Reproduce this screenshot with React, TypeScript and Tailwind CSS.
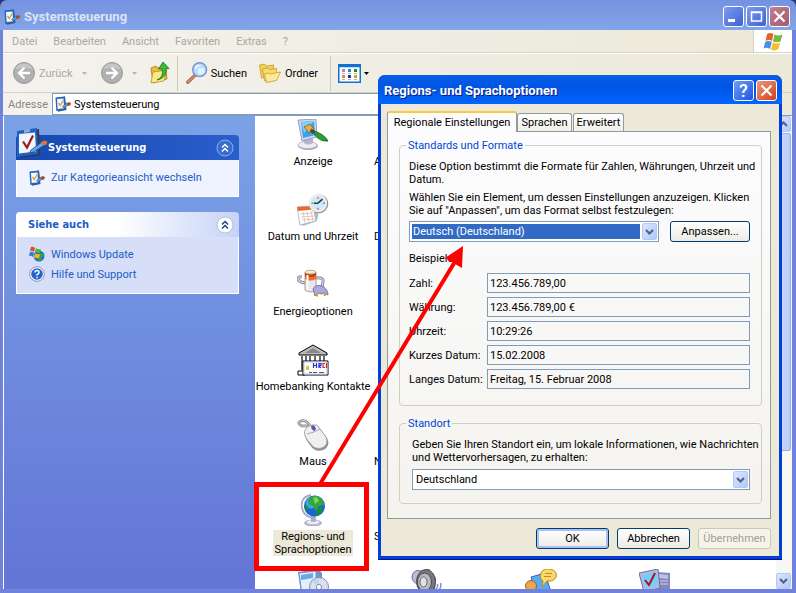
import React from 'react';

const PanelIcon: React.FC<{ className?: string }> = ({ className }) => (
  <svg viewBox="0 0 32 32" className={className}>
    <path d="M4 4l19-3 1 26-20 3z" fill="#333a50" />
    <path d="M1 3l20-3 1 26-21 3z" fill="#1d63c4" />
    <path d="M3 6l16-1.500 1 19L3 25.500z" fill="#eef6ff" />
    <path d="M8 1.500l6-1v3.500l-6 1z" fill="#8fa9cf" />
    <path d="M7 13.500l4 6 6-12" fill="none" stroke="#a01818" strokeWidth="2.200" />
    <path d="M15 22l11-8 2.500 3-11 7-4 1z" fill="#64a6ee" stroke="#24457c" strokeWidth=".8" />
    <path d="M25 14.500l3-2 3.500 1-1 3-3.500 1z" fill="#e8742c" />
  </svg>
);

const RunIcon: React.FC<{ className?: string }> = ({ className }) => (
  <svg viewBox="0 0 16 16" className={className}>
    <path d="M2 2l8-1.500 1.500 13.500-8.500 1.700z" fill="#4a5266" />
    <path d="M.5 1.500l9.500-1 .8 13-9.500 1.500z" fill="#2367bd" />
    <path d="M2 3l6.500-.6.6 9.800-6.500.8z" fill="#f4faff" />
    <path d="M3.500 7l1.800 2.500L8 4.500" fill="none" stroke="#d8a038" strokeWidth="1.300" />
    <path d="M7.500 10.500l4-3.500 1.500 2.200-4 3z" fill="#54a0f0" stroke="#24457c" strokeWidth=".5" />
    <path d="M11.500 7.500L13.500 6 16 7l-.5 2.300-2.700.7z" fill="#a4511d" />
  </svg>
);

const WindowsFlag: React.FC<{ className?: string }> = ({ className }) => (
  <svg viewBox="0 0 20 19" className={className}>
    <path d="M4 2Q7 0 10.500 2L9 9Q6 7 2.500 9z" fill="#e8632c" />
    <path d="M11.500 2.500Q15 4.500 19.500 2.500L17.500 9.500Q13.500 11 10 9.500z" fill="#79b93c" />
    <path d="M2.200 10Q5.500 8 8.800 10L7 17Q4 15 .5 16.500z" fill="#4b8de0" />
    <path d="M9.800 10.500Q13.500 12.500 17.200 10.500L15.500 17Q11.500 19.500 8 17.500z" fill="#f6bd30" />
  </svg>
);

const NavCircle: React.FC<{ forward?: boolean }> = ({ forward }) => (
  <svg viewBox="0 0 24 24" className="w-6 h-6">
    <circle cx="12" cy="12" r="10.500" fill="#b0b0b0" stroke="#9a9a9a" />
    <path d="M3 9a9.500 9.500 0 0 1 18 0Q12 4 3 9z" fill="#c6c6c6" />
    {forward ? (
      <path d="M6 12h10M11.500 6.500L17 12l-5.500 5.500" fill="none" stroke="#fff" strokeWidth="2.400" />
    ) : (
      <path d="M18 12H8M12.500 6.500L7 12l5.500 5.500" fill="none" stroke="#fff" strokeWidth="2.400" />
    )}
  </svg>
);

const UpFolderIcon = () => (
  <svg viewBox="0 0 20 24" className="w-5 h-6">
    <path d="M1 7l5-2 2 2 8-1 1 12-14 4z" fill="#e9bd3c" stroke="#a97d18" strokeWidth=".8" />
    <path d="M1 22l2-11 14-2-3 11z" fill="#fbe987" stroke="#bb9025" strokeWidth=".8" />
    <path d="M7 19q7-3 5-11H8.500L13 1l6 6.500h-3Q17 17 7 19z" fill="#3db83a" stroke="#1b781d" strokeWidth=".8" />
  </svg>
);

const SearchIcon = () => (
  <svg viewBox="0 0 24 24" className="w-6 h-6">
    <path d="M1.500 21L10 13l2 2-8 8q-3 1-2.500-2z" fill="#df8442" stroke="#7a55a0" strokeWidth=".8" />
    <circle cx="15.500" cy="8.500" r="7.300" fill="#b8e0fb" stroke="#7d8fd4" strokeWidth="1.500" />
    <path d="M10 8q1-5 7-4.500-3 1-7 4.500z" fill="#fff" />
    <circle cx="17" cy="10" r="3.500" fill="#dff4ff" />
  </svg>
);

const FoldersIcon = () => (
  <svg viewBox="0 0 23 20" className="w-6 h-5">
    <path d="M1 2l5-1 2 2 7-1v10L3 15z" fill="#f4cf55" stroke="#c79a2a" strokeWidth=".8" />
    <path d="M4 6l5-1 2 1.500 7-1v10L6 18z" fill="#f8dc70" stroke="#c79a2a" strokeWidth=".8" />
    <path d="M6 11l4-1 2 1 10-2-4 8.500L8 19.500z" fill="#fceb96" stroke="#c79a2a" strokeWidth=".8" />
  </svg>
);

const ViewsIcon = () => (
  <svg viewBox="0 0 23 19" className="w-[23px] h-[19px]">
    <rect x=".75" y=".75" width="21.500" height="17.500" fill="#fff" stroke="#1270cf" strokeWidth="1.500" />
    <path d="M1 2h21" stroke="#1270cf" strokeWidth="2.500" />
    <path d="M4 5h3v3H4z" fill="#9a93c8" />
    <path d="M10 5h3v3h-3z" fill="#2f7fe0" />
    <path d="M16 5h3v3h-3z" fill="#12941d" />
    <path d="M4 11h3v3H4z" fill="#f4814a" />
    <path d="M10 11h3v3h-3z" fill="#12409c" />
    <path d="M16 11h3v3h-3z" fill="#d2a411" />
    <path d="M4 9.500h3m3 0h3m3 0h3M4 15.500h3m3 0h3m3 0h3" stroke="#b4b4b4" />
  </svg>
);

const MonitorArt = () => (
  <>
    <ellipse cx="11" cy="27" rx="10" ry="4" fill="#a9a9c0" />
    <ellipse cx="10.500" cy="26" rx="9.500" ry="3.700" fill="#ececf6" stroke="#a3a3bd" strokeWidth=".7" />
    <path d="M7 19l9 1v4q-5 3-9 0z" fill="#b4b4cc" />
    <path d="M1 1l18-1 1 18-15 4z" fill="#d4d4e8" stroke="#8d8daa" strokeWidth=".8" />
    <path d="M4 3l13-1 1 14-12 3z" fill="#35a2f3" />
    <path d="M4 3l13-1-10 12z" fill="#7fd0ff" />
    <path d="M7 8l6-3 4 5-5 4z" fill="#e2ae46" stroke="#8a5b14" strokeWidth=".8" />
    <path d="M17 12q10 3 14 10-8 1-14-7z" fill="#29a033" stroke="#0e6417" strokeWidth=".9" />
    <path d="M14 9.500l4.500 2.500-2.500 3-3-2.500z" fill="#4a4a42" />
  </>
);

const ClockArt = () => (
  <>
    <path d="M1 14l21 3-2 10-14 5-3-3z" fill="#b3bbcc" />
    <path d="M0 13l16-1 3 15-16 4z" fill="#fff" stroke="#a4acbe" strokeWidth=".8" />
    <path d="M0 13l16-1 .6 3.500L1 17z" fill="#ea6a2c" />
    <path d="M3 20l13-1M4 23l13-1M5 26l13-1M6 18l2 11M10 18l2 10M14 17l2 10" stroke="#dfb9ac" strokeWidth=".8" />
    <circle cx="21.800" cy="9.800" r="9.500" fill="#909298" />
    <circle cx="21" cy="9.200" r="8.200" fill="#cdeafb" stroke="#eceef2" strokeWidth="1.800" />
    <path d="M21 9.200l4.500-4M21 9.200h-4" stroke="#273958" strokeWidth="1.600" />
    <path d="M21 2.700v2m0 9v2m-6.500-6.500h2m9.500 0h2" stroke="#e85c33" strokeWidth="1.300" />
  </>
);

const PowerArt = () => (
  <>
    <path d="M8 14q-6-1-7-4 0-3 4-2M19 9q8-1 7 4l-1 5" fill="none" stroke="#85869d" strokeWidth="3" />
    <path d="M8 14q-6-1-7-4 0-3 4-2M19 9q8-1 7 4l-1 5" fill="none" stroke="#d8d8e4" strokeWidth="1.200" />
    <path d="M8 3q5-3 11 0v18q-6 4-11 0z" fill="#e9e5ea" stroke="#9a8685" strokeWidth=".8" />
    <path d="M8 4q5 3 11 0v6q-6 3-11 0z" fill="#e8702c" />
    <path d="M8 4q5 3 11 0v2.500q-6 3-11 0z" fill="#b5401b" />
    <path d="M10.500 6v15" stroke="#fffaf0" strokeWidth="2" />
    <ellipse cx="13.500" cy="3" rx="5.500" ry="1.800" fill="#f6eac3" stroke="#a69178" strokeWidth=".6" />
    <path d="M16 20q3-5 9-3 6 3 6 9l-4-2-3 1-3-1-3 3z" fill="#a8aae0" stroke="#6062a0" strokeWidth=".8" />
    <path d="M20 23v4.500m7-4.500l1 4" stroke="#d2a52b" strokeWidth="2.200" />
  </>
);

const BankArt = () => (
  <>
    <path d="M2 9L16 1l14 8v2H2z" fill="#bbb" stroke="#000" />
    <path d="M8 9l8-5 8 5z" fill="#888" />
    <path d="M4 12h24v14H4z" fill="#fff" />
    <path d="M5 12v14m4-14v14m4-14v14m5-14v14m5-14v14m4-14v14" stroke="#444" strokeWidth="1.600" />
    <path d="M1 27h7v4H1z" fill="#fff" stroke="#000" />
    <path d="M6 17h25v14H6z" fill="#fff" stroke="#000" />
    <path d="M7 18h23v12H7z" fill="none" stroke="#b7ccf0" />
    <path d="M9 22h3v4H9z" fill="#e5c81c" />
    <path d="M16.500 19v5m3-5v5m-3-2.500h3M22 24v-4.500h2v2h-2l2 2.500" fill="none" stroke="#1830d8" strokeWidth="1.200" />
    <path d="M28 19.500h-2v4h2M29.500 19v5" fill="none" stroke="#e02525" strokeWidth="1.200" />
    <path d="M12 28.500h3m1 0h4m2 0h5" stroke="#555" strokeWidth="1.200" />
  </>
);

const MouseArt = () => (
  <>
    <path d="M13 7Q9 0 4 2T5 7q9-1 8 4" fill="none" stroke="#777" strokeWidth="2.600" />
    <path d="M13 7Q9 0 4 2T5 7q9-1 8 4" fill="none" stroke="#d5d5d5" strokeWidth="1.200" />
    <path d="M8 12q3-6 13-5l9 12q4 8-4 12-8 3-13-5Q6 17 8 12z" fill="#8f8f94" />
    <path d="M8 11q3-6 12-5l9 12q3 8-4 11-8 2-12-5Q6 17 8 11z" fill="#f0f0f1" stroke="#9a9aa0" strokeWidth=".8" />
    <path d="M10 15q6-1 13-5M14 6l4 6" fill="none" stroke="#a9a9b0" />
    <ellipse cx="16.500" cy="9" rx="2" ry="2.800" fill="#5658ab" transform="rotate(-30 16.500 9)" />
  </>
);

const GlobeArt = () => (
  <>
    <ellipse cx="16" cy="29" rx="8.500" ry="3" fill="#c0c0d4" stroke="#8b8ba6" strokeWidth=".6" />
    <ellipse cx="16" cy="28" rx="6" ry="1.800" fill="#f4f4fa" />
    <path d="M14 22h5v6h-5z" fill="#b0b0ca" />
    <path d="M14 1Q3 3 5 14q2 9 12 10" fill="none" stroke="#a7a7c6" strokeWidth="1.800" />
    <circle cx="17.500" cy="12" r="10.500" fill="#1768cf" />
    <circle cx="14" cy="9" r="5.500" fill="#3fa2f2" />
    <path d="M14 3q7-4 12 4l1 4-5 1-3 5-3-5-4-2-1-4z" fill="#31a83b" />
    <path d="M21 14l5-1-2 6-4 3q-2-3 1-8zM8 10l4 4-1 3-3-2z" fill="#1f8e33" />
    <path d="M16 4l4-1 2 4-4 3z" fill="#8bcd4e" />
  </>
);

const SoftwareArt = () => (
  <>
    <path d="M1 3l20-3 4 4v28H5z" fill="#6f94cc" />
    <path d="M2 4l17-2v30H6z" fill="#e3effb" stroke="#7397c8" />
    <path d="M4 6l12-2v5L4 11z" fill="#67a7ec" />
    <circle cx="22" cy="18" r="9.500" fill="#dbdfee" stroke="#8490b3" />
    <path d="M22 18l-7-6q3-3 7-3z" fill="#b6d9f4" />
    <path d="M22 18l8 1q0 4-4 7z" fill="#f1d3e1" />
    <circle cx="22" cy="18" r="2.600" fill="#fff" stroke="#8490b3" />
  </>
);

const SpeakerArt = () => (
  <>
    <ellipse cx="7" cy="8" rx="6" ry="6.500" fill="#bdbdd6" stroke="#6c6c92" />
    <path d="M9 2l9-2 7 10-2 20-10-5z" fill="#66666b" />
    <ellipse cx="15" cy="12.500" rx="9.500" ry="12" fill="#77777c" stroke="#4b4b50" />
    <ellipse cx="13.500" cy="13" rx="7" ry="9" fill="#b9b9be" stroke="#4d4d54" />
    <ellipse cx="12.500" cy="13" rx="3.500" ry="5" fill="#e2e2e6" stroke="#6b6b72" />
    <path d="M25 20q2-2 1.500-5m2 5q2-2 1-6" fill="none" stroke="#8b8ad0" strokeWidth="1.500" />
  </>
);

const SpeechArt = () => (
  <>
    <path d="M6 8l14-4 5 16-14 5z" fill="#55aef3" stroke="#3a65a5" />
    <path d="M16 4q2-5 9-4 8 2 6 8-2 5-9 4l-5 6 1-6q-4-2-2-8z" fill="#fad76a" stroke="#bd8820" />
    <path d="M20 4.500h7m-8 3h7" stroke="#c68b22" />
    <circle cx="6" cy="17" r="5.500" fill="#efa44e" stroke="#a96222" />
    <path d="M0 30q1-8 7-8t7 10z" fill="#7889ce" />
  </>
);

const SystemArt = () => (
  <>
    <path d="M18 3l13 1v26l-12-3z" fill="#8587ba" />
    <path d="M20 5l9 1v4l-9-1z" fill="#c0c1e2" />
    <path d="M20 12h9m-9 3h9" stroke="#c9caec" />
    <path d="M0 4l19-4 2 19L5 23z" fill="#b6b9dc" stroke="#6b6ea5" />
    <path d="M3 6l14-3 2 13-13 3z" fill="#75cdfb" />
    <path d="M6 11l4 5L16 4" fill="none" stroke="#a51616" strokeWidth="2" />
  </>
);

type Entry = { label: string; art?: React.ReactNode; selected?: boolean } | null;

const entries: Entry[] = [
  { label: 'Anzeige', art: <MonitorArt /> },
  { label: 'A' },
  null,
  null,
  { label: 'Datum und Uhrzeit', art: <ClockArt /> },
  { label: 'D' },
  null,
  null,
  { label: 'Energieoptionen', art: <PowerArt /> },
  null,
  null,
  null,
  { label: 'Homebanking Kontakte', art: <BankArt /> },
  null,
  null,
  null,
  { label: 'Maus', art: <MouseArt /> },
  { label: 'N' },
  null,
  null,
  { label: 'Regions- und Sprachoptionen', art: <GlobeArt />, selected: true },
  { label: 'S' },
  null,
  null,
  { label: '', art: <SoftwareArt /> },
  { label: '', art: <SpeakerArt /> },
  { label: '', art: <SpeechArt /> },
  { label: '', art: <SystemArt /> },
];

const menus = ['Datei', 'Bearbeiten', 'Ansicht', 'Favoriten', 'Extras', '?'];

const samples = [
  { id: 'zahl', label: 'Zahl:', value: '123.456.789,00' },
  { id: 'waehrung', label: 'Währung:', value: '123.456.789,00 €' },
  { id: 'uhrzeit', label: 'Uhrzeit:', value: '10:29:26' },
  { id: 'kurz', label: 'Kurzes Datum:', value: '15.02.2008' },
  { id: 'lang', label: 'Langes Datum:', value: 'Freitag, 15. Februar 2008' },
];

const Caret: React.FC<{ className: string }> = ({ className }) => (
  <svg viewBox="0 0 5 3" fill="currentColor" className={className}>
    <path d="M0 0h5L2.500 3z" />
  </svg>
);

const Arrow: React.FC<{ up?: boolean }> = ({ up }) => (
  <span className="flex w-[15px] shrink-0 items-center justify-center rounded-[2px] border border-[#b5c8f5] bg-linear-to-br from-[#dbe6fe] to-[#b0c8f8] pointer-events-none">
    <svg viewBox="0 0 9 6" className="w-[9px] h-[6px]">
      <path d={up ? 'M1 5l3.500-3.500L8 5' : 'M1 1l3.500 3.500L8 1'} fill="none" stroke="#4d6185" strokeWidth="2" />
    </svg>
  </span>
);

const Chevrons: React.FC<{ dark?: boolean }> = ({ dark }) => (
  <svg viewBox="0 0 18 18" className="w-[18px] h-[18px]">
    <circle cx="9" cy="9" r="8" fill={dark ? '#3a6bd0' : '#fff'} stroke={dark ? '#8fb0ee' : '#b7bfdc'} />
    <path d="M6 8.500l3-3 3 3M6 12.500l3-3 3 3" fill="none" stroke={dark ? '#fff' : '#1c3f96'} strokeWidth="1.500" />
  </svg>
);

const captionButton = 'flex w-[21px] h-[21px] items-center justify-center rounded-[3px] border border-white';

const ExplorerTitle = () => (
  <header className="flex h-[30px] shrink-0 items-center gap-1 rounded-t-[7px] pl-1 pr-[6px] pt-[3px] bg-linear-to-b from-[#7593e4] from-0% via-[#7b98e0] via-40% to-[#84a5ea]">
    <RunIcon className="w-4 h-4" />
    <h1 className="flex-1 text-[13px] leading-4 font-bold text-[#d8e4f8]">Systemsteuerung</h1>
    <div className="flex gap-[2px]">
      <button aria-label="Minimieren" className={`${captionButton} bg-linear-to-br from-[#7c9cf0] to-[#3e62d4]`}>
        <svg viewBox="0 0 19 19" className="w-[19px] h-[19px]"><path d="M4 12h7v3H4z" fill="#fff" /></svg>
      </button>
      <button aria-label="Maximieren" className={`${captionButton} bg-linear-to-br from-[#7c9cf0] to-[#3e62d4]`}>
        <svg viewBox="0 0 19 19" className="w-[19px] h-[19px]"><path d="M4.500 5h10v9h-10zM4 5.500h11" fill="none" stroke="#fff" strokeWidth="1.500" /></svg>
      </button>
      <button aria-label="Fenster schließen" className={`${captionButton} bg-linear-to-br from-[#c08091] to-[#a45a70]`}>
        <svg viewBox="0 0 19 19" className="w-[19px] h-[19px]"><path d="M4.500 4.500l10 10m0-10l-10 10" stroke="#fff" strokeWidth="2.200" /></svg>
      </button>
    </div>
  </header>
);

const MenuBar = () => (
  <nav className="flex h-[23px] shrink-0 items-stretch border-b border-[#d8d2bd]">
    <ul className="flex flex-1 items-center gap-4 pl-[9px] text-[#aca899]">
      {menus.map((m) => (
        <li key={m}>
          <button>{m}</button>
        </li>
      ))}
    </ul>
    <div className="flex w-[39px] items-center justify-center border-l border-[#d8d2bd] bg-white">
      <WindowsFlag className="w-5 h-[19px]" />
    </div>
  </nav>
);

const Toolbar = () => (
  <div className="flex h-[40px] shrink-0 items-center border-t border-white border-b border-b-[#d8d2bd] pl-[9px]">
    <button className="flex w-[62px] items-center gap-[3px] text-[#aca899]">
      <NavCircle />
      Zurück
    </button>
    <Caret className="ml-2 w-[5px] h-[3px] text-[#bab6a8]" />
    <button aria-label="Vorwärts" className="ml-[13px]">
      <NavCircle forward />
    </button>
    <Caret className="ml-2 w-[5px] h-[3px] text-[#bab6a8]" />
    <button aria-label="Aufwärts" className="ml-[13px]">
      <UpFolderIcon />
    </button>
    <div className="mx-[7px] h-[35px] w-px bg-[#cdc8b4]" />
    <button className="flex w-[62px] items-center gap-[3px]">
      <SearchIcon />
      Suchen
    </button>
    <button className="ml-[11px] flex w-[62px] items-center gap-[3px]">
      <FoldersIcon />
      Ordner
    </button>
    <div className="ml-[10px] mr-[7px] h-[35px] w-px bg-[#cdc8b4]" />
    <button aria-label="Ansichten" className="flex items-center gap-[3px]">
      <ViewsIcon />
      <Caret className="w-[5px] h-[3px] text-black" />
    </button>
  </div>
);

const TaskPane = () => (
  <aside className="flex w-[252px] shrink-0 flex-col gap-[15px] border-l border-white bg-linear-to-b from-[#7ba2e7] to-[#6375d6] pt-[19px] pl-3 pr-4 text-[#215dc6]">
    <section>
      <div className="relative flex h-[25px] items-center justify-between rounded-t-[4px] bg-linear-to-r from-[#1648b0] to-[#2a5ecb] pl-8 pr-[5px]">
        <PanelIcon className="absolute left-0 -top-[7px] w-8 h-8" />
        <h2 className="font-['DejaVu_Sans_Condensed','Noto_Sans',sans-serif] font-bold text-white">Systemsteuerung</h2>
        <Chevrons dark />
      </div>
      <div className="border border-t-0 border-white bg-[#eff3ff] px-3 pt-2 pb-[9px]">
        <a href="#kategorie" className="flex h-[19px] items-center gap-[6px]">
          <RunIcon className="w-4 h-4" />
          Zur Kategorieansicht wechseln
        </a>
      </div>
    </section>
    <section>
      <div className="flex h-[25px] items-center justify-between rounded-t-[4px] bg-linear-to-r from-white from-45% to-[#c6d3f7] pl-3 pr-[5px]">
        <h2 className="font-['DejaVu_Sans_Condensed','Noto_Sans',sans-serif] font-bold">Siehe auch</h2>
        <Chevrons />
      </div>
      <div className="flex flex-col border border-t-0 border-white bg-[#d6dff7] px-3 pt-[7px] pb-[9px]">
        <a href="#update" className="flex h-5 items-center gap-[6px]">
          <svg viewBox="0 0 16 16" className="w-4 h-4">
            <circle cx="10" cy="10" r="5.500" fill="#1c70c9" />
            <path d="M8 9l5-2 2 3-3 1 1 3-3 1z" fill="#35a839" />
            <path d="M2 1q2-1 4 1L5 6Q3 4 1 5z" fill="#df4b2a" />
            <path d="M7 2q2 2 5 1l-1 4q-3 1-5-1z" fill="#55b03a" />
            <path d="M1 6q2-1 4 1l-1 4Q2 9 0 10z" fill="#3478dc" />
            <path d="M6 7q2 2 5 1l-1 4q-3 1-5-1z" fill="#f0b627" />
          </svg>
          Windows Update
        </a>
        <a href="#hilfe" className="flex h-5 items-center gap-[6px]">
          <svg viewBox="0 0 16 16" className="w-4 h-4">
            <circle cx="8" cy="8" r="7.300" fill="#fff" stroke="#8591b5" />
            <circle cx="8" cy="8" r="5.800" fill="#2462cf" />
            <path d="M6 6.500Q6 4.500 8 4.500t2 2q0 1-2 2.200v.8M8 10.800v1.400" fill="none" stroke="#fff" strokeWidth="1.500" />
          </svg>
          Hilfe und Support
        </a>
      </div>
    </section>
  </aside>
);

const IconView = () => (
  <main className="flex-1 overflow-hidden bg-white pt-[3px] pl-px">
    <div className="grid grid-cols-[repeat(4,114px)] auto-rows-[75px]">
      {entries.map((e, i) => (
        <div key={i} className="flex flex-col items-center gap-1 text-center">
          {e && (
            <>
              <svg viewBox="0 0 32 32" className="w-8 h-8 shrink-0">{e.art}</svg>
              {e.selected ? (
                <span className="w-20 bg-[#ece9d8]">{e.label}</span>
              ) : (
                <span className={e.art ? 'whitespace-nowrap' : 'w-[106px] text-left'}>{e.label}</span>
              )}
            </>
          )}
        </div>
      ))}
    </div>
  </main>
);

const xpButton = 'h-[21px] rounded-[3px] border border-[#003c74] bg-linear-to-b from-white to-[#ecebe5]';

const Dialog = () => (
  <div
    role="dialog"
    aria-labelledby="dialog-title"
    className="absolute left-[378px] top-[75px] flex w-[404px] flex-col rounded-t-[7px] bg-[#0040d8] px-[3px] pb-[3px] border-b border-[#00138c]"
  >
    <header className="-mx-[3px] flex h-[29px] items-center justify-between rounded-t-[7px] bg-linear-to-b from-[#0a5fe8] from-0% via-[#0054e3] via-40% to-[#0266ff] pl-[6px] pr-[5px] pt-[2px]">
      <h2 id="dialog-title" className="text-[13px] leading-4 font-bold text-white [text-shadow:1px_1px_#0a1883]">
        Regions- und Sprachoptionen
      </h2>
      <div className="flex gap-[2px]">
        <button aria-label="Hilfe" className={`${captionButton} bg-linear-to-br from-[#6f9cf8] to-[#1f52e0]`}>
          <span className="text-[18px] leading-5 font-medium text-white">?</span>
        </button>
        <button aria-label="Schließen" className={`${captionButton} bg-linear-to-br from-[#f0967a] to-[#d13c12]`}>
          <svg viewBox="0 0 19 19" className="w-[19px] h-[19px]"><path d="M4.500 4.500l10 10m0-10l-10 10" stroke="#fff" strokeWidth="2.200" /></svg>
        </button>
      </div>
    </header>
    <div className="bg-[#ece9d8] pl-[6px] pr-2 pt-[7px] pb-[7px]">
      <div role="tablist" className="flex items-end pr-4">
        <button role="tab" aria-selected="true" className="relative z-10 -mb-px h-[21px] w-[130px] rounded-t-[3px] border border-b-0 border-[#919b9c] border-t-2 border-t-[#ffc73c] bg-[#fcfcfe] pb-px">
          Regionale Einstellungen
        </button>
        <button role="tab" aria-selected="false" className="h-[18px] w-[55px] rounded-t-[3px] border border-b-0 border-[#919b9c] bg-linear-to-b from-white to-[#f0f0ea]">
          Sprachen
        </button>
        <button role="tab" aria-selected="false" className="ml-px h-[18px] w-[51px] rounded-t-[3px] border border-b-0 border-[#919b9c] bg-linear-to-b from-white to-[#f0f0ea]">
          Erweitert
        </button>
      </div>
      <div className="flex flex-col gap-[11px] border border-[#919b9c] bg-linear-to-b from-[#fcfcfe] to-[#f4f3ee] pt-[7px] pr-2 pb-[14px] pl-[11px]">
        <fieldset className="min-w-0 rounded-[4px] border border-[#d0d0bf] pl-[9px] pr-[11px] pb-4">
          <legend className="-ml-[3px] px-[2px] text-[#0046d5]">Standards und Formate</legend>
          <p className="mt-2 whitespace-nowrap">
            Diese Option bestimmt die Formate für Zahlen, Währungen, Uhrzeit und
            <br />
            Datum.
          </p>
          <label htmlFor="locale" className="mt-[5px] block whitespace-nowrap">
            Wählen Sie ein Element, um dessen Einstellungen anzuzeigen. Klicken
            <br />
            Sie auf &quot;Anpassen&quot;, um das Format selbst festzulegen:
          </label>
          <div className="mt-1 flex items-center gap-[11px]">
            <div className="flex h-[21px] flex-1 border border-[#7f9db9] bg-white p-px">
              <select id="locale" className="m-px mr-[2px] flex-1 appearance-none bg-[#316ac5] pl-px text-white">
                <option>Deutsch (Deutschland)</option>
              </select>
              <Arrow />
            </div>
            <button className={`${xpButton} w-20`}>Anpassen...</button>
          </div>
          <p className="mt-[10px]">Beispiele</p>
          <div className="mt-2 flex flex-col gap-1">
            {samples.map((s) => (
              <div key={s.id} className="flex items-center">
                <label htmlFor={s.id} className="w-[78px] shrink-0">{s.label}</label>
                <input id={s.id} readOnly value={s.value} className="h-5 min-w-0 flex-1 border border-[#7f9db9] bg-transparent px-[2px]" />
              </div>
            ))}
          </div>
        </fieldset>
        <fieldset className="min-w-0 rounded-[4px] border border-[#d0d0bf] pl-3 pr-[11px] pb-[13px]">
          <legend className="-ml-[6px] px-[2px] text-[#0046d5]">Standort</legend>
          <label htmlFor="region" className="mt-2 block whitespace-nowrap">
            Geben Sie Ihren Standort ein, um lokale Informationen, wie Nachrichten
            <br />
            und Wettervorhersagen, zu erhalten:
          </label>
          <div className="mt-[5px] flex h-[21px] border border-[#7f9db9] bg-white p-px">
            <select id="region" className="flex-1 appearance-none bg-white pl-[2px]">
              <option>Deutschland</option>
            </select>
            <Arrow />
          </div>
        </fieldset>
      </div>
      <div className="mt-[9px] flex justify-end gap-2">
        <button className={`${xpButton} w-[73px] ring-2 ring-inset ring-[#a9c2f2]`}>OK</button>
        <button className={`${xpButton} w-[73px]`}>Abbrechen</button>
        <button disabled className="h-[21px] w-[73px] rounded-[3px] border border-[#c9c7ba] bg-[#f5f4ea] text-[#a1a192]">
          Übernehmen
        </button>
      </div>
    </div>
  </div>
);

const App: React.FC = () => {
  return (
    <div className="relative flex h-screen w-full flex-col overflow-hidden bg-[#2a3a6e] font-['Roboto','Liberation_Sans',sans-serif] text-[11px] leading-[13px] text-black">
      <ExplorerTitle />
      <div className="flex min-h-0 flex-1 flex-col border-x-[3px] border-r-4 border-b-4 border-[#6f82dc] bg-linear-to-r from-[#f3f2ee] to-[#ece9d8]">
        <MenuBar />
        <Toolbar />
        <div className="flex h-[23px] shrink-0 items-center border-b border-[#7f9db9]">
          <label htmlFor="address" className="w-[49px] pl-[5px] text-[#8b887b]">Adresse</label>
          <div className="flex h-[22px] flex-1 items-center gap-[3px] border border-[#7f9db9] bg-white pl-[2px]">
            <RunIcon className="w-4 h-4" />
            <input id="address" defaultValue="Systemsteuerung" className="min-w-0 flex-1" />
          </div>
          <span className="w-[62px]" />
        </div>
        <div className="flex min-h-0 flex-1">
          <TaskPane />
          <IconView />
          <div className="flex w-4 shrink-0 flex-col bg-[#f7f7f3]">
            <span className="flex h-4"><Arrow up /></span>
            <span className="my-px h-[318px] w-[15px] rounded-[2px] border border-[#98b0ea] bg-linear-to-r from-[#cddcfd] to-[#b9cdf9]" />
            <span className="mt-auto flex h-4"><Arrow /></span>
          </div>
        </div>
      </div>
      <Dialog />
      <div className="pointer-events-none absolute left-[254px] top-[482px] h-[89px] w-[115px] border-[5px] border-[#fe0000]" />
      <svg viewBox="0 0 160 250" className="pointer-events-none absolute left-[310px] top-[240px] h-[250px] w-[160px]">
        <path d="M10 244L146 20" stroke="#fe0000" strokeWidth="4" />
        <path d="M153 6l-18 12 17 10z" fill="#fe0000" />
      </svg>
    </div>
  );
};

export default App;
